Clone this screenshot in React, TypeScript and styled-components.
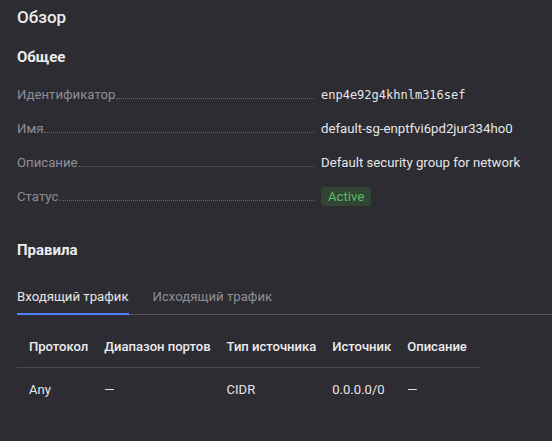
import { Fragment } from 'react';
import styled, { createGlobalStyle } from 'styled-components';

const GlobalStyle = createGlobalStyle`
  html, body {
    margin: 0;
    padding: 0;
    background: #2d2c33;
  }
  body {
    font-family: Roboto, 'Open Sans', sans-serif;
    color: #e6e6e8;
  }
`;

const Page = styled.div`
  width: 552px;
  height: 441px;
  overflow: hidden;
  padding: 5px 0 0 17px;
  box-sizing: border-box;
  background: #2d2c33;
`;

const Title = styled.h1`
  margin: 0;
  font-size: 17px;
  font-weight: 500;
  line-height: 24px;
  color: #ececee;
`;

const SectionTitle = styled.h2<{ $top: number }>`
  margin: ${({ $top }) => $top}px 0 0;
  font-size: 15px;
  font-weight: 700;
  line-height: 20px;
  color: #ececee;
`;

const Props = styled.dl`
  margin: 18px 0 0;
  display: grid;
  grid-template-columns: 304px 1fr;
  row-gap: 14px;
`;

const Label = styled.dt`
  display: flex;
  align-items: baseline;
  padding-right: 7px;
  font-size: 13.2px;
  line-height: 20px;
  color: #8f8e95;

  &::after {
    content: '';
    flex: 1;
    margin-left: 1px;
    border-bottom: 1px dotted #6a696f;
  }
`;

const Value = styled.dd<{ $mono?: boolean }>`
  margin: 0;
  font-size: ${({ $mono }) => ($mono ? '12px' : '13.2px')};
  font-family: ${({ $mono }) =>
    $mono ? "'DejaVu Sans Mono', monospace" : "Roboto, sans-serif"};
  line-height: 20px;
  color: #e6e6e8;
`;

const Badge = styled.span`
  display: inline-block;
  padding: 0 7px;
  border-radius: 3px;
  background: #314534;
  color: #5dbb63;
  font-size: 13.2px;
  line-height: 19px;
`;

const Tabs = styled.div`
  margin-top: 27px;
  display: flex;
  gap: 24px;
  border-bottom: 1px solid #56555b;
`;

const Tab = styled.div<{ $active?: boolean }>`
  padding-bottom: 6px;
  margin-bottom: -1px;
  font-size: 13.2px;
  line-height: 20px;
  color: ${({ $active }) => ($active ? '#e6e6e8' : '#8f8e95')};
  border-bottom: 2px solid ${({ $active }) => ($active ? '#5282ff' : 'transparent')};
`;

const Table = styled.table`
  margin-top: 16px;
  border-collapse: collapse;
  font-size: 13.05px;
`;

const Th = styled.th`
  text-align: left;
  font-weight: 500;
  color: #ececee;
  padding: 7px 8px 11px;
  line-height: 18px;
  white-space: nowrap;
  border-bottom: 1px solid #4b4a50;

  &:first-child {
    padding-left: 12px;
  }
  &:last-child {
    padding-right: 13px;
  }
`;

const Td = styled.td`
  padding: 12px 8px;
  line-height: 20px;
  color: #e6e6e8;
  white-space: nowrap;

  &:first-child {
    padding-left: 12px;
  }
`;

const rows = [
  { label: 'Идентификатор', value: 'enp4e92g4khnlm316sef', mono: true },
  { label: 'Имя', value: 'default-sg-enptfvi6pd2jur334ho0' },
  { label: 'Описание', value: 'Default security group for network' },
];

const columns = ['Протокол', 'Диапазон портов', 'Тип источника', 'Источник', 'Описание'];
const ruleRow = ['Any', '—', 'CIDR', '0.0.0.0/0', '—'];

export default function App() {
  return (
    <>
      <GlobalStyle />
      <Page>
        <Title>Обзор</Title>
        <SectionTitle $top={18}>Общее</SectionTitle>
        <Props>
          {rows.map((r) => (
            <Fragment key={r.label}>
              <Label>{r.label}</Label>
              <Value $mono={r.mono}>{r.value}</Value>
            </Fragment>
          ))}
          <Label>Статус</Label>
          <Value>
            <Badge>Active</Badge>
          </Value>
        </Props>
        <SectionTitle $top={33}>Правила</SectionTitle>
        <Tabs>
          <Tab $active>Входящий трафик</Tab>
          <Tab>Исходящий трафик</Tab>
        </Tabs>
        <Table>
          <thead>
            <tr>
              {columns.map((c) => (
                <Th key={c}>{c}</Th>
              ))}
            </tr>
          </thead>
          <tbody>
            <tr>
              {ruleRow.map((c, i) => (
                <Td key={i}>{c}</Td>
              ))}
            </tr>
          </tbody>
        </Table>
      </Page>
    </>
  );
}
